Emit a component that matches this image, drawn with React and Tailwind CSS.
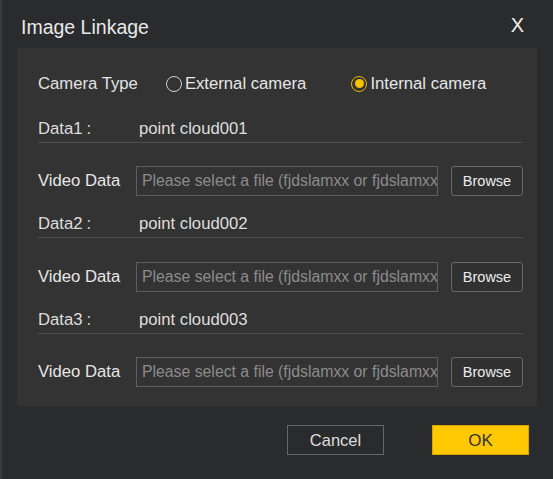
import React from "react";

function DataRow({ label, value }) {
  return (
    <div className="flex h-[26px] items-center border-b border-[#505050] text-[#dedede]">
      <div className="w-[101px] shrink-0">
        {label}
        <span className="ml-[4px]">:</span>
      </div>
      <div>{value}</div>
    </div>
  );
}

function VideoRow() {
  return (
    <div className="flex items-center">
      <div className="w-[98px] shrink-0 text-[#e6e6e6]">Video Data</div>
      <input
        readOnly
        placeholder="Please select a file (fjdslamxx or fjdslamxx.txt)"
        className="box-border h-[30px] w-[302px] shrink-0 border border-[#5e5e5e] bg-[#333333] pl-[5px] pr-0 text-[15.8px] text-[#8c8c8c] outline-none placeholder:text-[#8c8c8c]"
        style={{ fontFamily: '"Liberation Sans", Arial, sans-serif' }}
      />
      <button className="ml-[13px] flex h-[30px] w-[72px] items-center justify-center rounded-[3px] border border-[#686868] bg-[#313131] text-[14.5px] text-[#ececec]">
        Browse
      </button>
    </div>
  );
}

export default function App() {
  return (
    <div
      className="flex h-[479px] w-[553px] flex-col overflow-hidden border-l-2 border-[#3a3b3d] bg-[#2a2b2d] text-[16.7px] leading-none"
      style={{ fontFamily: '"Liberation Sans", Arial, sans-serif' }}
    >
      <div className="flex h-[48px] shrink-0 items-start justify-between pl-[19px] pr-[29px]">
        <div className="mt-[15px] text-[19.5px] leading-[24px] text-[#e8e8e8]">Image Linkage</div>
        <div className="mt-[13px] text-[20px] leading-[24px] text-[#eeeeee]">X</div>
      </div>

      <div className="ml-[15px] mr-[16px] flex flex-col bg-[#333333] pb-[19px] pl-[21px] pr-[14px] pt-[24px]">
        <div className="flex h-[24px] items-center">
          <div className="text-[#e2e2e2]">Camera Type</div>
          <div className="ml-[28px] flex items-center">
            <span className="box-border h-[16px] w-[16px] rounded-full border border-[#cfcfcf]"></span>
            <span className="ml-[3px] text-[#e6e6e6]">External camera</span>
          </div>
          <div className="ml-[45px] flex items-center">
            <span className="box-border flex h-[16px] w-[16px] items-center justify-center rounded-full border border-[#e8b800]">
              <span className="h-[9px] w-[9px] rounded-full bg-[#f5c400]"></span>
            </span>
            <span className="ml-[3px] text-[#e6e6e6]">Internal camera</span>
          </div>
        </div>

        <div className="mt-[21px]">
          <DataRow label="Data1" value="point cloud001" />
        </div>
        <div className="mt-[23px]">
          <VideoRow />
        </div>
        <div className="mt-[16px]">
          <DataRow label="Data2" value="point cloud002" />
        </div>
        <div className="mt-[24px]">
          <VideoRow />
        </div>
        <div className="mt-[16px]">
          <DataRow label="Data3" value="point cloud003" />
        </div>
        <div className="mt-[23px]">
          <VideoRow />
        </div>
      </div>

      <div className="mt-[19px] flex justify-end pr-[24px]">
        <button className="flex h-[30px] w-[97px] items-center justify-center border border-[#666666] bg-[#2a2b2d] text-[16.5px] text-[#dddddd]">
          Cancel
        </button>
        <button className="ml-[48px] flex h-[30px] w-[97px] items-center justify-center border border-[#d9a600] bg-[#ffc800] text-[17px] text-[#333333]">
          OK
        </button>
      </div>
    </div>
  );
}
